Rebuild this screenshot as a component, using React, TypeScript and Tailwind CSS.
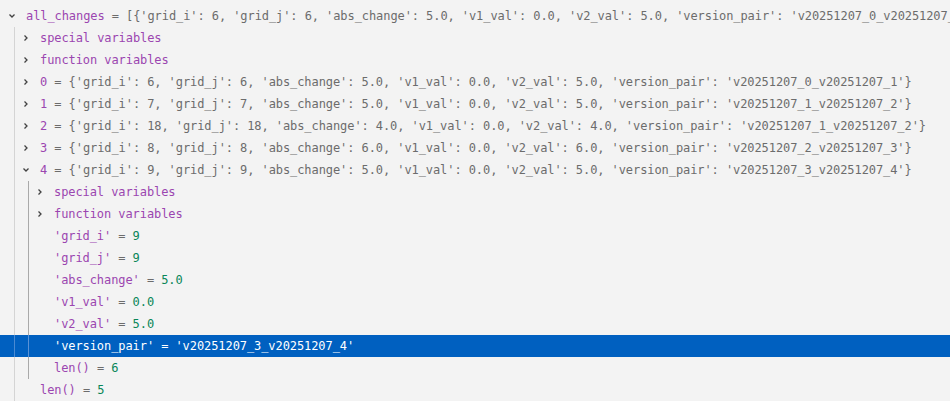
import React from "react";

type Kind = "obj" | "num" | "str" | "none";
type RowData = {
  level: number;
  twistie: "right" | "down" | null;
  name: string;
  value?: string;
  kind?: Kind;
  selected?: boolean;
};

const dict = (i: number, a: string, v2: string, pair: string) =>
  `{'grid_i': ${i}, 'grid_j': ${i}, 'abs_change': ${a}, 'v1_val': 0.0, 'v2_val': ${v2}, 'version_pair': '${pair}'}`;

const rows: RowData[] = [
  {
    level: 0,
    twistie: "down",
    name: "all_changes",
    value:
      "[" +
      dict(6, "5.0", "5.0", "v20251207_0_v20251207_1") +
      ", " +
      dict(7, "5.0", "5.0", "v20251207_1_v20251207_2") +
      "]",
    kind: "obj",
  },
  { level: 1, twistie: "right", name: "special variables" },
  { level: 1, twistie: "right", name: "function variables" },
  { level: 1, twistie: "right", name: "0", value: dict(6, "5.0", "5.0", "v20251207_0_v20251207_1"), kind: "obj" },
  { level: 1, twistie: "right", name: "1", value: dict(7, "5.0", "5.0", "v20251207_1_v20251207_2"), kind: "obj" },
  { level: 1, twistie: "right", name: "2", value: dict(18, "4.0", "4.0", "v20251207_1_v20251207_2"), kind: "obj" },
  { level: 1, twistie: "right", name: "3", value: dict(8, "6.0", "6.0", "v20251207_2_v20251207_3"), kind: "obj" },
  { level: 1, twistie: "down", name: "4", value: dict(9, "5.0", "5.0", "v20251207_3_v20251207_4"), kind: "obj" },
  { level: 2, twistie: "right", name: "special variables" },
  { level: 2, twistie: "right", name: "function variables" },
  { level: 2, twistie: null, name: "'grid_i'", value: "9", kind: "num" },
  { level: 2, twistie: null, name: "'grid_j'", value: "9", kind: "num" },
  { level: 2, twistie: null, name: "'abs_change'", value: "5.0", kind: "num" },
  { level: 2, twistie: null, name: "'v1_val'", value: "0.0", kind: "num" },
  { level: 2, twistie: null, name: "'v2_val'", value: "5.0", kind: "num" },
  { level: 2, twistie: null, name: "'version_pair'", value: "'v20251207_3_v20251207_4'", kind: "str", selected: true },
  { level: 2, twistie: null, name: "len()", value: "6", kind: "num" },
  { level: 1, twistie: null, name: "len()", value: "5", kind: "num" },
];

function Chevron({ dir, selected }: { dir: "right" | "down"; selected?: boolean }) {
  return (
    <svg
      width="16"
      height="16"
      viewBox="0 0 16 16"
      className={dir === "down" ? "rotate-90" : ""}
      fill="none"
      stroke={selected ? "#ffffff" : "#424242"}
      strokeWidth="1.3"
    >
      <path d="M6.5 5.5 L9 8 L6.5 10.5" />
    </svg>
  );
}

function Row({ r, index }: { r: RowData; index: number }) {
  // guide k (1-based) is "active" when belonging to item 4's children (rows 8-16 at level 2)
  const cells = [];
  for (let k = 1; k <= r.level; k++) {
    const active = k === 2;
    cells.push(
      <div
        key={k}
        className={
          "h-full w-[14px] shrink-0 border-r " +
          (r.selected
            ? active
              ? "border-[#5a92d6]"
              : "border-[#4a8ad2]"
            : active
            ? "border-[#a9a9a9]"
            : "border-[#d4d4d4]")
        }
      />
    );
  }
  const valueColor = r.selected
    ? "text-white"
    : r.kind === "num"
    ? "text-[#098658]"
    : "text-[#6c6c6c]";
  return (
    <div
      data-i={index}
      className={
        "flex h-[22px] items-center whitespace-pre overflow-hidden " +
        (r.selected ? "bg-[#0060c0]" : "")
      }
    >
      <div className="w-[1px] h-full shrink-0" />
      {cells}
      <div className="w-[3px] h-full shrink-0" />
      <div className="w-[16px] h-[16px] shrink-0 flex items-center justify-center">
        {r.twistie && <Chevron dir={r.twistie} selected={r.selected} />}
      </div>
      <div className="w-[6px] shrink-0" />
      <span className={r.selected ? "text-white" : "text-[#9b46b0]"}>{r.name}</span>
      {r.value !== undefined && (
        <>
          <span className={r.selected ? "text-white" : "text-[#6c6c6c]"}> = </span>
          <span className={valueColor}>{r.value}</span>
        </>
      )}
    </div>
  );
}

export default function App() {
  return (
    <div
      className="w-[950px] h-[401px] overflow-hidden bg-[#f3f3f3] pt-[5px] text-[12px] tracking-[-0.08px]"
      style={{ fontFamily: '"DejaVu Sans Mono", "Liberation Mono", monospace' }}
    >
      {rows.map((r, i) => (
        <Row key={i} r={r} index={i} />
      ))}
    </div>
  );
}
